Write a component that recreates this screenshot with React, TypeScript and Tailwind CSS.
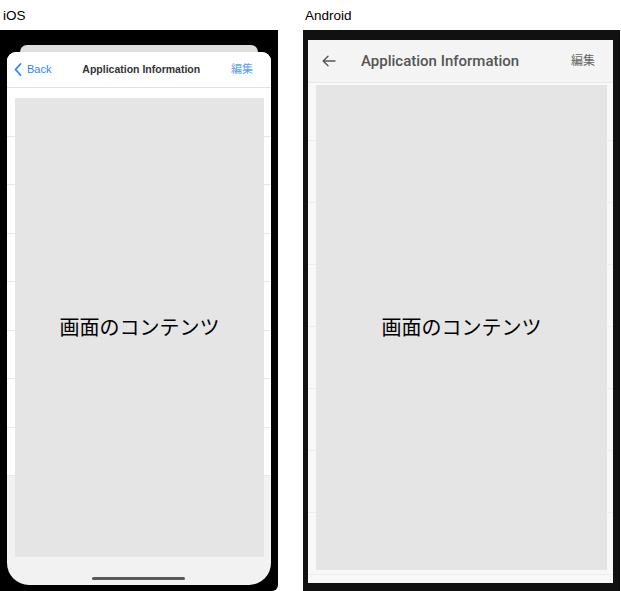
import React from 'react';

const font = { fontFamily: '"Liberation Sans", "Noto Sans CJK JP", sans-serif' };

const IosScreen = () => {
  const rows = Array.from({ length: 8 });
  return (
    <div className="w-[278px] flex flex-col">
      <div className="h-[30px] pl-[3px] pt-[8px] text-[13.5px] leading-[16px] text-black">iOS</div>
      <div className="h-[561px] bg-black pt-[15px] flex flex-col rounded-br-[6px]">
        <div className="mx-[20px] h-[7px] bg-[#dedede] rounded-t-[8px]" />
        <div className="mx-[7px] h-[533px] bg-[#f2f2f2] rounded-t-[9px] rounded-b-[22px] overflow-hidden flex flex-col relative">
          <div className="h-[36px] shrink-0 bg-white border-b border-[#e2e2e2] flex items-center justify-between pl-[7px] pr-[18px]">
            <div className="flex items-center gap-[5px] text-[#2b86f7]">
              <svg width="8" height="13" viewBox="0 0 8 13" fill="none">
                <path d="M6.5 1 L1.5 6.5 L6.5 12" stroke="#2b86f7" strokeWidth="1.8" strokeLinecap="round" strokeLinejoin="round" />
              </svg>
              <span className="text-[11px]">Back</span>
            </div>
            <span className="text-[10.5px] font-bold text-[#333]">Application Information</span>
            <span className="text-[11px] text-[#54a0f8]">編集</span>
          </div>
          {rows.map((_, i) => (
            <div key={i} className="h-[48.5px] shrink-0 bg-white border-b border-[#e6e6e6]" />
          ))}
          <div className="absolute left-[8px] top-[46px] w-[249px] h-[459px] bg-[#e5e5e5] flex items-center justify-center">
            <span className="text-[20px] text-black">画面のコンテンツ</span>
          </div>
          <div className="absolute left-[85px] bottom-[5px] w-[93px] h-[3px] rounded-full bg-[#5a5a5a]" />
        </div>
      </div>
    </div>
  );
};

const AndroidScreen = () => {
  const rows = Array.from({ length: 7 });
  return (
    <div className="w-[317px] flex flex-col">
      <div className="h-[30px] pl-[2px] pt-[8px] text-[13.5px] leading-[16px] text-black">Android</div>
      <div className="h-[561px] bg-[#111] pl-[5px] pr-[7px] pt-[10px] pb-[8px]">
        <div className="h-full bg-[#f8f8f8] flex flex-col relative overflow-hidden">
          <div className="h-[43px] shrink-0 bg-[#f4f4f4] border-b border-[#e9e9e9] flex items-center pl-[14px] pr-[18px]">
            <svg width="14" height="12" viewBox="0 0 14 12" fill="none">
              <path d="M13 6 H1.5 M6 1.2 L1.2 6 L6 10.8" stroke="#555" strokeWidth="1.4" strokeLinecap="round" strokeLinejoin="round" />
            </svg>
            <span className="ml-[25px] text-[15px] font-medium text-[#555]" style={{ fontFamily: 'Roboto, sans-serif' }}>
              Application Information
            </span>
            <span className="ml-auto text-[12px] text-[#666]">編集</span>
          </div>
          <div className="h-[58px] shrink-0 border-b border-[#ececec]" />
          {rows.map((_, i) => (
            <div key={i} className="h-[62px] shrink-0 border-b border-[#ececec]" />
          ))}
          <div className="absolute left-[8px] top-[45px] w-[291px] h-[485px] bg-[#e5e5e5] flex items-center justify-center">
            <span className="text-[20px] text-black">画面のコンテンツ</span>
          </div>
        </div>
      </div>
    </div>
  );
};

export default function App() {
  return (
    <div className="w-[621px] h-[591px] bg-white flex gap-[25px] overflow-hidden" style={font}>
      <IosScreen />
      <AndroidScreen />
    </div>
  );
}
